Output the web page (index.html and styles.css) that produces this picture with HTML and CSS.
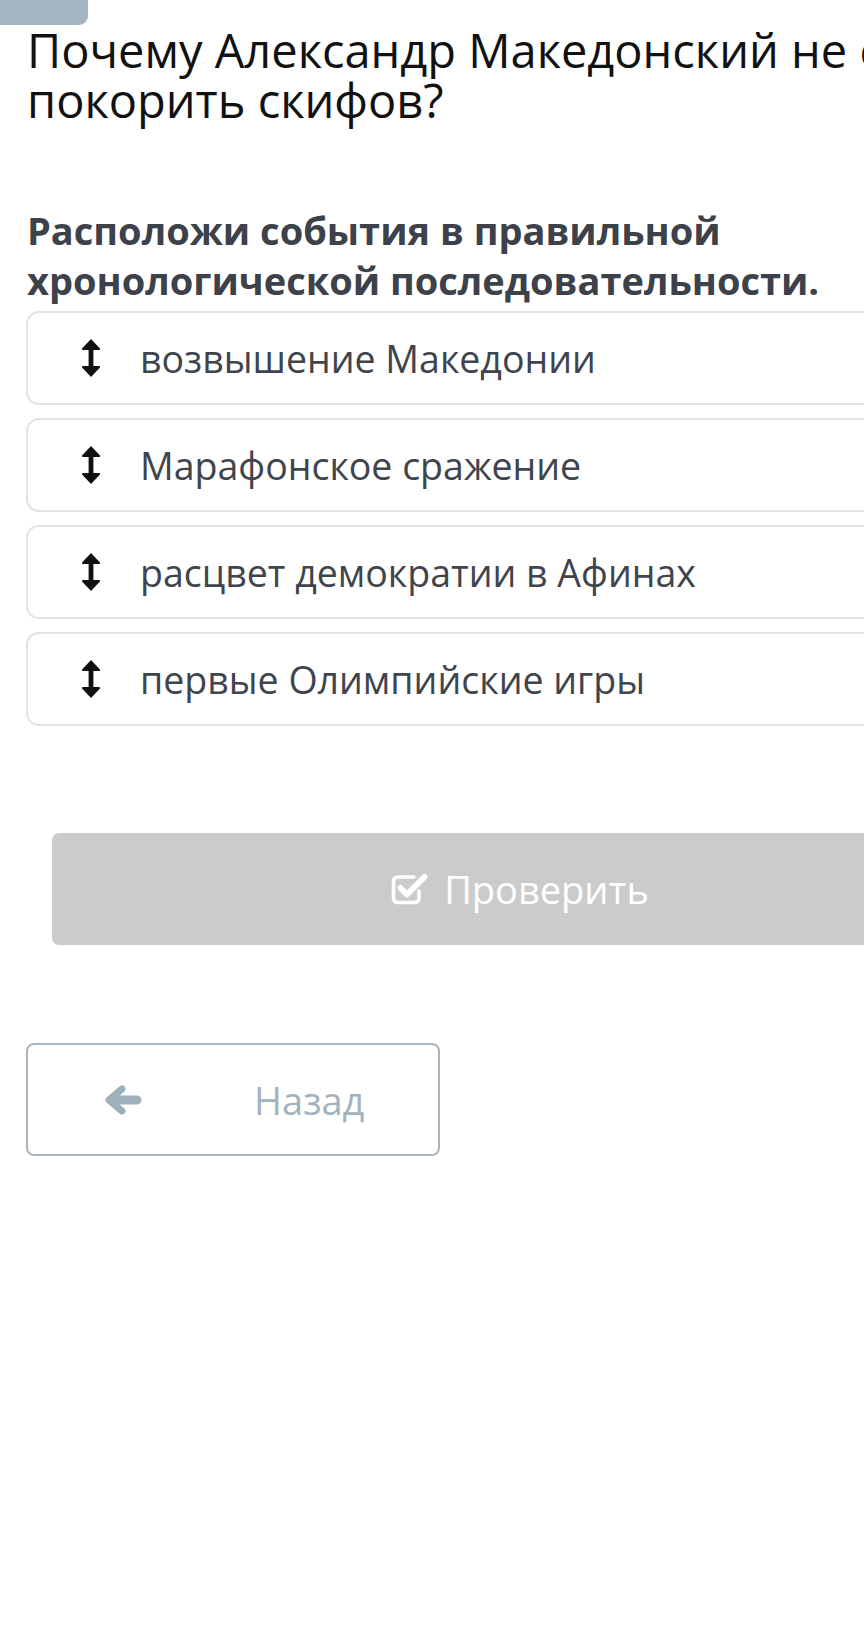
FILE: index.html
```html
<!DOCTYPE html>
<html lang="ru">
<head>
<meta charset="utf-8">
<title>Задание</title>
<link rel="stylesheet" href="styles.css">
</head>
<body>
<div class="page">
  <div class="tab"></div>
  <h1 class="question">Почему Александр Македонский не смог покорить скифов?</h1>
  <h2 class="task">Расположи события в правильной хронологической последовательности.</h2>
  <ul class="items">
    <li class="item">
      <svg class="drag" viewBox="0 0 20 40" aria-hidden="true"><path d="M10 1 L19 10.5 Q19.5 12 18 12 L12.4 12 L12.4 28 L18 28 Q19.5 28 19 29.5 L10 39 L1 29.5 Q0.5 28 2 28 L7.6 28 L7.6 12 L2 12 Q0.5 12 1 10.5 Z" fill="#111"/></svg>
      <span class="label">возвышение Македонии</span>
    </li>
    <li class="item">
      <svg class="drag" viewBox="0 0 20 40" aria-hidden="true"><path d="M10 1 L19 10.5 Q19.5 12 18 12 L12.4 12 L12.4 28 L18 28 Q19.5 28 19 29.5 L10 39 L1 29.5 Q0.5 28 2 28 L7.6 28 L7.6 12 L2 12 Q0.5 12 1 10.5 Z" fill="#111"/></svg>
      <span class="label">Марафонское сражение</span>
    </li>
    <li class="item">
      <svg class="drag" viewBox="0 0 20 40" aria-hidden="true"><path d="M10 1 L19 10.5 Q19.5 12 18 12 L12.4 12 L12.4 28 L18 28 Q19.5 28 19 29.5 L10 39 L1 29.5 Q0.5 28 2 28 L7.6 28 L7.6 12 L2 12 Q0.5 12 1 10.5 Z" fill="#111"/></svg>
      <span class="label">расцвет демократии в Афинах</span>
    </li>
    <li class="item">
      <svg class="drag" viewBox="0 0 20 40" aria-hidden="true"><path d="M10 1 L19 10.5 Q19.5 12 18 12 L12.4 12 L12.4 28 L18 28 Q19.5 28 19 29.5 L10 39 L1 29.5 Q0.5 28 2 28 L7.6 28 L7.6 12 L2 12 Q0.5 12 1 10.5 Z" fill="#111"/></svg>
      <span class="label">первые Олимпийские игры</span>
    </li>
  </ul>
  <div class="check-wrap">
    <button class="check" type="button">
      <svg class="check-icon" viewBox="0 0 38 32" aria-hidden="true">
        <path d="M28 18 V25 Q28 29.5 23.5 29.5 H7 Q2.5 29.5 2.5 25 V8.5 Q2.5 4 7 4 H23" fill="none" stroke="#fff" stroke-width="3.6" stroke-linecap="round"/>
        <path d="M9.5 15 L16 21.5 L33.5 4" fill="none" stroke="#fff" stroke-width="6" stroke-linecap="round" stroke-linejoin="round"/>
      </svg>
      <span>Проверить</span>
    </button>
  </div>
  <button class="back" type="button">
    <svg class="back-icon" viewBox="0 0 38 30" aria-hidden="true">
      <path d="M18 4 L5 15 L18 26" fill="none" stroke="#9fb0bd" stroke-width="7" stroke-linecap="round" stroke-linejoin="round"/>
      <path d="M7 15 H33" fill="none" stroke="#9fb0bd" stroke-width="9" stroke-linecap="round"/>
    </svg>
    <span>Назад</span>
  </button>
</div>
</body>
</html>
```

FILE: styles.css
```css
html, body {
  margin: 0;
  padding: 0;
  background: #ffffff;
  overflow: hidden;
}

body {
  font-family: "Open Sans", "Noto Sans", sans-serif;
  width: 864px;
  height: 1638px;
}

.page {
  width: 1040px;
  box-sizing: border-box;
  padding: 0 26px;
}

.tab {
  width: 88px;
  height: 25px;
  margin-left: -26px;
  background: #a4b4c0;
  border-bottom-right-radius: 9px;
}

.question {
  margin: 0 0 0 1px;
  font-size: 47px;
  font-weight: 400;
  line-height: 50px;
  color: #111111;
}

.task {
  margin: 80px 0 0 1px;
  font-size: 38px;
  font-weight: 700;
  line-height: 50px;
  color: #3c414a;
}

.items {
  list-style: none;
  margin: 6px 0 0 0;
  padding: 0;
  display: flex;
  flex-direction: column;
  gap: 13px;
}

.item {
  height: 94px;
  box-sizing: border-box;
  border: 2px solid #e2e2e2;
  border-radius: 13px;
  display: flex;
  align-items: center;
  padding-left: 53px;
}

.drag {
  width: 20px;
  height: 40px;
  flex: none;
  margin-right: 39px;
}

.label {
  font-size: 37.5px;
  color: #40444d;
  line-height: 1.36;
}

.check-wrap {
  padding: 107px 26px 0 26px;
}

.check {
  width: 100%;
  height: 112px;
  border: none;
  border-radius: 7px;
  background: #cbcbcb;
  color: #ffffff;
  font-family: "Open Sans", "Noto Sans", sans-serif;
  font-size: 38px;
  display: flex;
  align-items: center;
  justify-content: center;
  gap: 15px;
  padding: 0;
}

.check-icon {
  width: 38px;
  height: 32px;
  flex: none;
}

.back {
  margin-top: 98px;
  width: 414px;
  height: 113px;
  box-sizing: border-box;
  border: 2px solid #a9b6c0;
  border-radius: 8px;
  background: #ffffff;
  display: flex;
  align-items: center;
  padding: 0 0 0 76px;
  font-family: "Open Sans", "Noto Sans", sans-serif;
  font-size: 38px;
  color: #a2b3bf;
}

.back-icon {
  width: 38px;
  height: 30px;
  flex: none;
  margin-right: 112px;
}
```
